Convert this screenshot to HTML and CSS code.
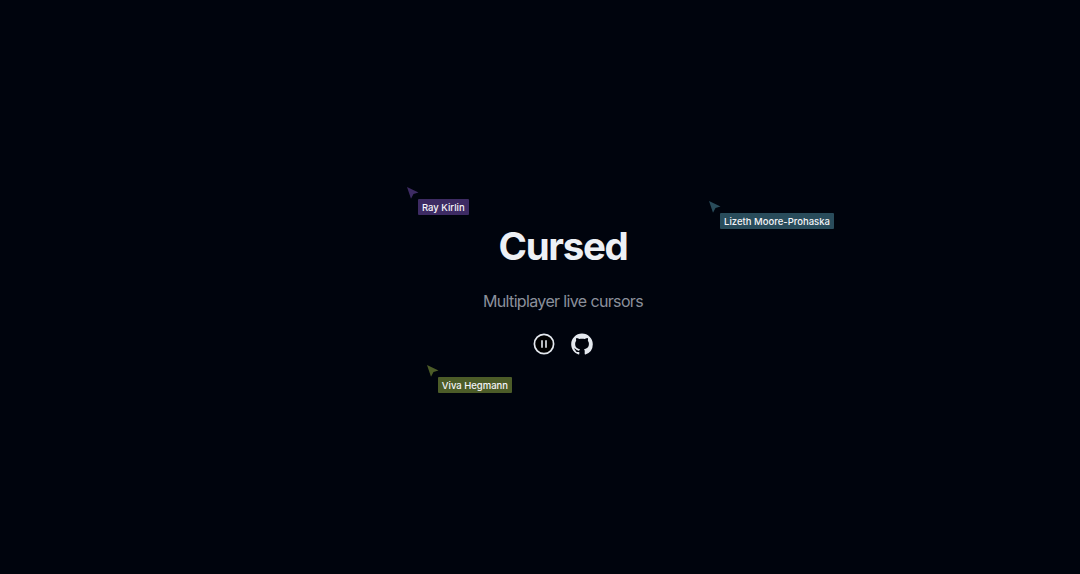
FILE: index.html
```html
<!DOCTYPE html>
<html lang="en">
<head>
<meta charset="utf-8">
<title>Cursed</title>
<link rel="stylesheet" href="styles.css">
</head>
<body>
<main class="hero">
  <h1 class="title">Cursed</h1>
  <p class="subtitle">Multiplayer live cursors</p>
  <div class="actions">
    <button class="action" type="button" aria-label="Pause">
      <svg class="icon" viewBox="0 0 22 22"><circle cx="11" cy="11" r="9.6" fill="#000" stroke="currentColor" stroke-width="1.7"/><path d="M9 7.2v7.6M13 7.2v7.6" stroke="currentColor" stroke-width="1.6"/></svg>
    </button>
    <a class="action" href="#" aria-label="GitHub">
      <svg class="icon" viewBox="-.15 -.35 16.3 16.3" fill="currentColor"><path d="M8 0C3.58 0 0 3.58 0 8c0 3.54 2.29 6.53 5.47 7.59.4.07.55-.17.55-.38 0-.19-.01-.82-.01-1.49-2.01.37-2.53-.49-2.69-.94-.09-.23-.48-.94-.82-1.13-.28-.15-.68-.52-.01-.53.63-.01 1.08.58 1.23.82.72 1.21 1.87.87 2.33.66.07-.52.28-.87.51-1.07-1.78-.2-3.64-.89-3.64-3.95 0-.87.31-1.59.82-2.15-.08-.2-.36-1.02.08-2.12 0 0 .67-.21 2.2.82.64-.18 1.32-.27 2-.27s1.36.09 2 .27c1.53-1.04 2.2-.82 2.2-.82.44 1.1.16 1.92.08 2.12.51.56.82 1.27.82 2.15 0 3.07-1.87 3.75-3.65 3.95.29.25.54.73.54 1.48 0 1.07-.01 1.93-.01 2.2 0 .21.15.46.55.38A8.01 8.01 0 0 0 16 8c0-4.42-3.58-8-8-8z"/></svg>
    </a>
  </div>
</main>
<div class="cursor ray">
  <svg class="pointer" viewBox="0 0 12 12"><path d="M0 0l11.5 5.5-5 1.5-2.5 4.7z"/></svg>
  <span class="name">Ray Kirlin</span>
</div>
<div class="cursor lizeth">
  <svg class="pointer" viewBox="0 0 12 12"><path d="M0 0l11.5 5.5-5 1.5-2.5 4.7z"/></svg>
  <span class="name">Lizeth Moore-Prohaska</span>
</div>
<div class="cursor viva">
  <svg class="pointer" viewBox="0 0 12 12"><path d="M0 0l11.5 5.5-5 1.5-2.5 4.7z"/></svg>
  <span class="name">Viva Hegmann</span>
</div>
</body>
</html>
```
FILE: styles.css
```css
* { box-sizing: border-box; }
body {
  margin: 0;
  height: 574px;
  overflow: hidden;
  position: relative;
  background: #00040d;
  color: #edf0f5;
  font-family: Inter, "Liberation Sans", sans-serif;
}
.hero {
  display: flex;
  flex-direction: column;
  align-items: center;
  padding: 222px 0 0 46px;
}
.title {
  margin: 0;
  font-size: 38.5px;
  line-height: 48px;
  font-weight: 700;
  letter-spacing: -1.3px;
}
.subtitle {
  margin: 19px 0 0;
  font-size: 16px;
  line-height: 24px;
  letter-spacing: -0.64px;
  color: #8b909b;
}
.actions { display: flex; gap: 16px; margin-top: 20px; }
.action {
  display: block;
  width: 22px;
  height: 22px;
  padding: 0;
  border: 0;
  background: none;
  color: #e4e9ef;
}
.icon { display: block; width: 22px; height: 22px; }
.cursor { position: absolute; }
.pointer { display: block; width: 12px; height: 12px; fill: var(--tone); }
.name {
  display: flex;
  align-items: center;
  justify-content: center;
  width: var(--label);
  height: 16px;
  margin-left: 11px;
  border-radius: 1px;
  background: var(--tone);
  color: #f4f4f8;
  font-size: 9.5px;
  font-weight: 500;
  white-space: nowrap;
}
.ray { left: 406.6px; top: 187px; --tone: #3d2b63; --label: 51.4px; }
.lizeth { left: 708.8px; top: 201px; --tone: #294c5b; --label: 114.4px; }
.viva { left: 426.6px; top: 365.4px; --tone: #4c5c28; --label: 74.6px; }
```
